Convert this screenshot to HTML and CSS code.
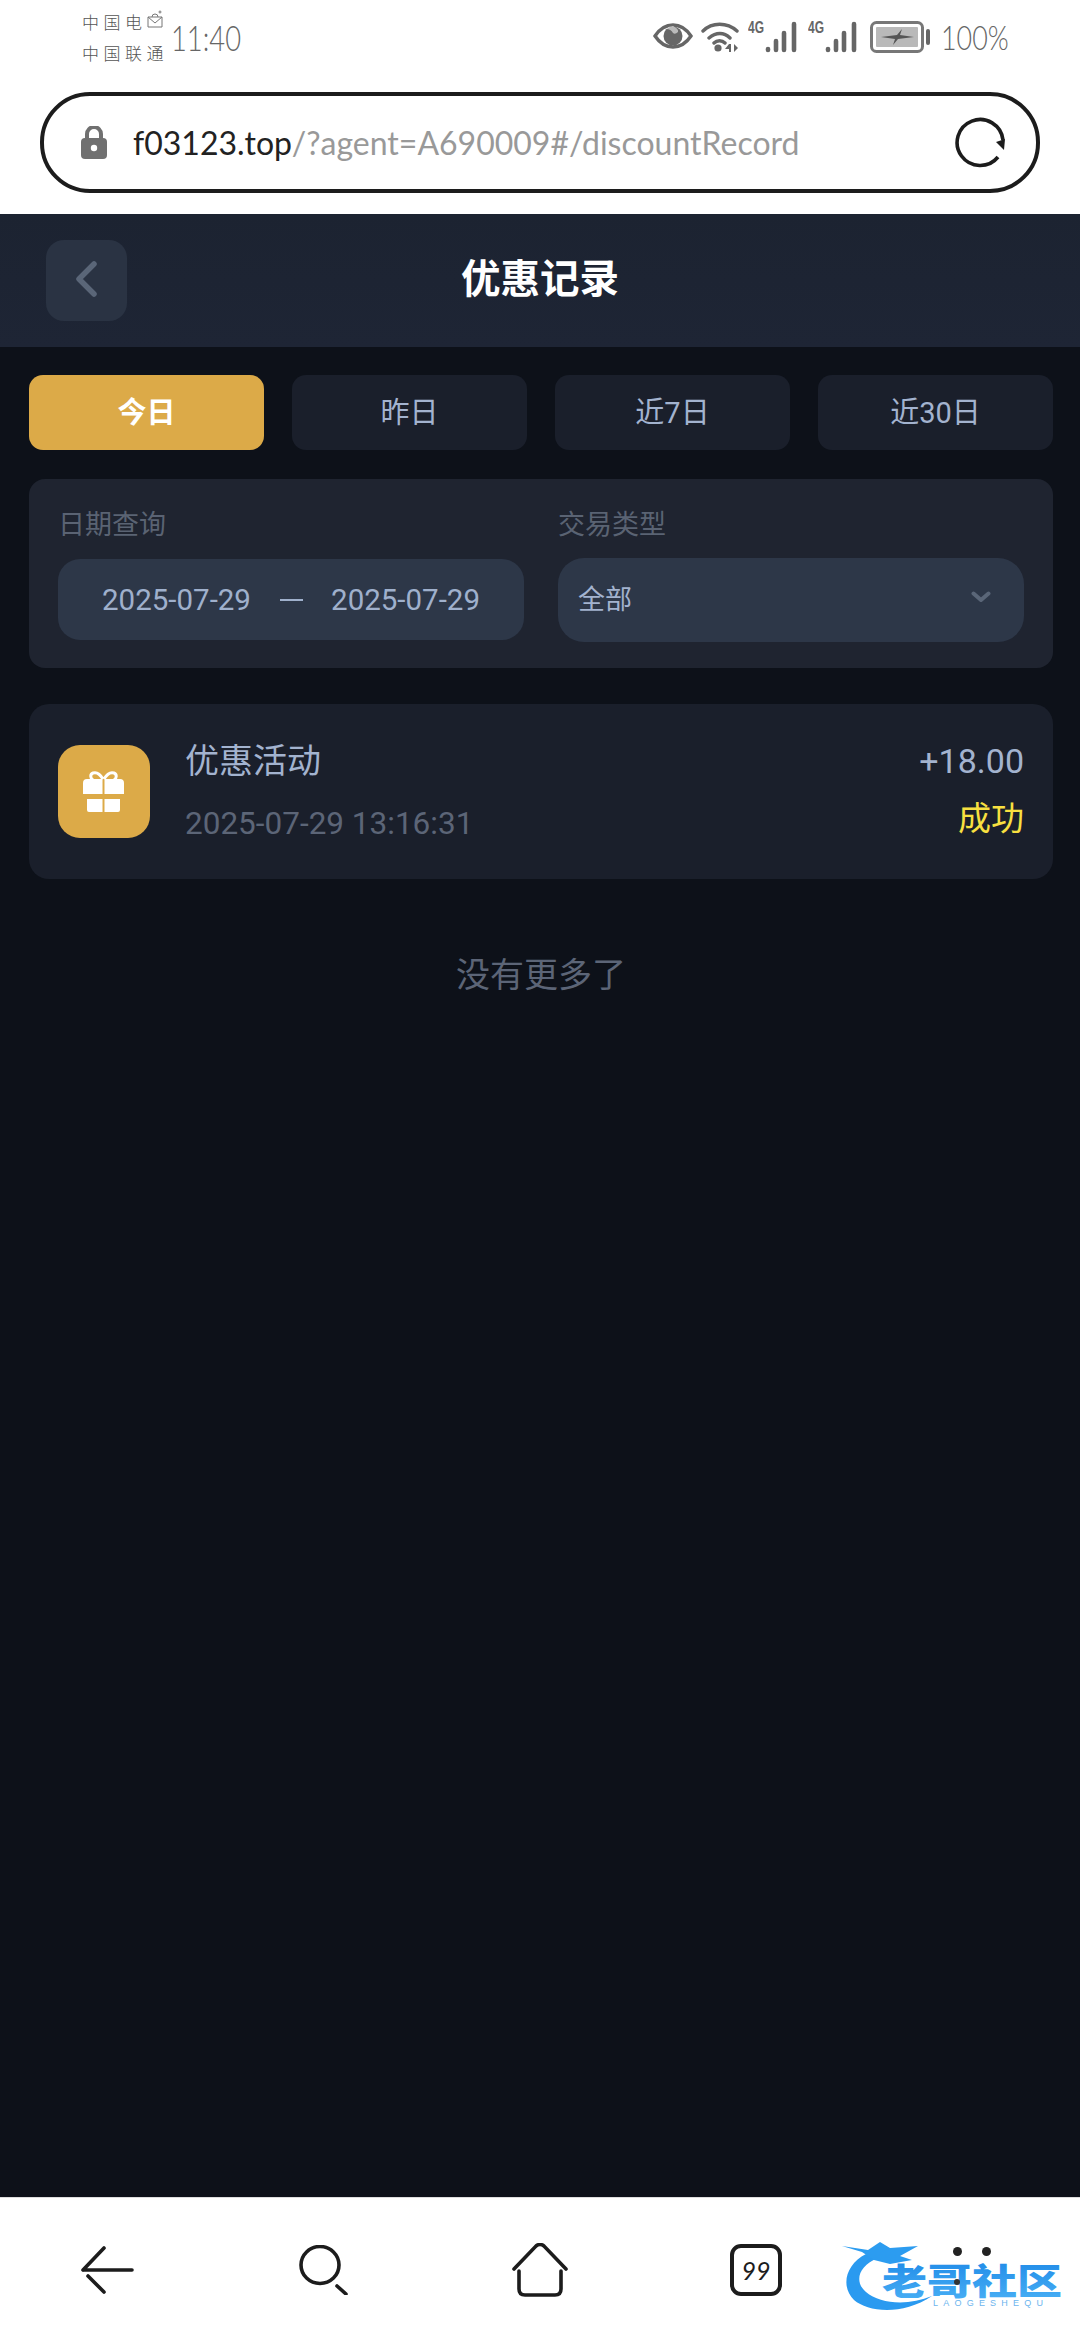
FILE: index.html
```html
<!DOCTYPE html>
<html lang="zh-CN">
<head>
    <meta charset="UTF-8">
    <meta name="viewport" content="width=device-width, initial-scale=1.0">
    <title>优惠记录</title>
    <link rel="stylesheet" href="styles.css">
</head>
<body>
    <div class="app">
        <div class="status-bar">
            <div class="carriers">
                <div class="carrier-line">中国电<svg class="mail-icon" width="16" height="18" viewBox="0 0 16 18"><path d="M1 7h14v10H1zM1 7l7 6 7-6M5 7a3 3 0 0 1 6 0" fill="none" stroke="#777" stroke-width="1"/><circle cx="13" cy="2" r="1" fill="none" stroke="#777"/></svg></div>
                <div class="carrier-line">中国联通</div>
            </div>
            <div class="clock">11:40</div>
            <div class="status-icons">
                <svg class="eye-icon" width="40" height="26" viewBox="0 0 40 26">
                    <path d="M2 13C8 4 14 2 20 2s12 2 18 11c-6 9-12 11-18 11S8 22 2 13z" fill="none" stroke="#666" stroke-width="3.4"/>
                    <circle cx="20" cy="13" r="9.5" fill="#666"/>
                    <path d="M20 3a10 10 0 0 0-7 3q5 0 7 4 2 2 5-1 1-3-5-6z" fill="#fff" opacity=".55"/>
                </svg>
                <svg class="wifi-icon" width="38" height="32" viewBox="0 0 38 32">
                    <path d="M2 10C11 1 26 1 36 10M8 17c7-6 15-6 21 0M13 22c3-3 8-3 11 0" fill="none" stroke="#666" stroke-width="3.4" stroke-linecap="round"/>
                    <circle cx="17" cy="27" r="3.6" fill="#666"/>
                    <path d="M28 23l-4 5h4v3h2v-8zM33 23v8l4-4z" fill="#666"/>
                </svg>
                <div class="signal">
                    <span class="signal-tag">4G</span>
                    <svg width="34" height="32" viewBox="0 0 34 32"><path d="M3 29v-1M11 29v-9M19 29v-17M29 29V3" fill="none" stroke="#666" stroke-width="4.6" stroke-linecap="round"/></svg>
                </div>
                <div class="signal">
                    <span class="signal-tag">4G</span>
                    <svg width="34" height="32" viewBox="0 0 34 32"><path d="M3 29v-1M11 29v-9M19 29v-17M29 29V3" fill="none" stroke="#666" stroke-width="4.6" stroke-linecap="round"/></svg>
                </div>
                <svg class="battery-icon" width="60" height="32" viewBox="0 0 60 32">
                    <rect x="1.5" y="1.5" width="51" height="29" rx="5" fill="#fff" stroke="#777" stroke-width="3"/>
                    <rect x="6" y="6" width="42" height="20" rx="1" fill="#b9b9b9"/>
                    <path d="M11 16l16-2 5-6-2 6 14 2-16 2-5 6 2-6z" fill="#555"/>
                    <rect x="56" y="8" width="4" height="16" rx="2" fill="#666"/>
                </svg>
                <span class="battery-text">100%</span>
            </div>
        </div>

        <div class="url-wrap">
            <div class="url-bar">
                <svg class="lock-icon" width="26" height="33" viewBox="0 0 26 33">
                    <path d="M6 14V8a7 7 0 0 1 14 0v6" fill="none" stroke="#707070" stroke-width="4"/>
                    <rect x="0" y="12" width="26" height="21" rx="4" fill="#707070"/>
                    <circle cx="13" cy="22" r="3.2" fill="#fff"/>
                </svg>
                <div class="url-text"><span class="url-host">f03123.top</span>/?agent=A690009#/discountRecord</div>
                <svg class="reload-icon" width="54" height="54" viewBox="0 0 54 54">
                    <path d="M44 41A23 23 0 1 1 49 24" fill="none" stroke="#1c1c1c" stroke-width="3.6"/>
                    <path d="M42 26l9-3-1 11z" fill="#1c1c1c"/>
                </svg>
            </div>
        </div>

        <div class="page">
            <div class="header">
                <div class="back-btn">
                    <svg width="24" height="36" viewBox="0 0 24 36"><path d="M20 3L5 18l15 15" fill="none" stroke="#5a6678" stroke-width="5.5" stroke-linecap="round" stroke-linejoin="round"/></svg>
                </div>
                <h1 class="title">优惠记录</h1>
            </div>

            <div class="content">
                <div class="tabs">
                    <div class="tab active">今日</div>
                    <div class="tab">昨日</div>
                    <div class="tab">近7日</div>
                    <div class="tab">近30日</div>
                </div>

                <div class="filter-card">
                    <div class="filter-col">
                        <div class="filter-label">日期查询</div>
                        <div class="date-box">
                            <span>2025-07-29</span>
                            <span class="date-dash"></span>
                            <span>2025-07-29</span>
                        </div>
                    </div>
                    <div class="filter-col">
                        <div class="filter-label">交易类型</div>
                        <div class="select-box">
                            <span>全部</span>
                            <svg width="20" height="12" viewBox="0 0 20 12"><path d="M2.5 2.5L10 9l7.5-6.5" fill="none" stroke="#5a6678" stroke-width="4" stroke-linecap="round" stroke-linejoin="round"/></svg>
                        </div>
                    </div>
                </div>

                <div class="record-card">
                    <div class="record-icon">
                        <svg width="42" height="42" viewBox="0 0 42 42">
                            <path d="M20 8C17 3 13 1 10 2 7 3 7 7 10 9M21 8c3-5 7-7 10-6 3 1 3 5 0 7" fill="none" stroke="#fff" stroke-width="3"/>
                            <path d="M0 12a4 4 0 0 1 4-4h15.500v15H0zM21.500 8H37a4 4 0 0 1 4 4v11H21.500z" fill="#fff"/>
                            <path d="M4 28h15.500v13H6a2 2 0 0 1-2-2zM21.500 28H37v11a2 2 0 0 1-2 2H21.500z" fill="#fff"/>
                        </svg>
                    </div>
                    <div class="record-info">
                        <div class="record-name">优惠活动</div>
                        <div class="record-time">2025-07-29 13:16:31</div>
                    </div>
                    <div class="record-right">
                        <div class="record-amount">+18.00</div>
                        <div class="record-status">成功</div>
                    </div>
                </div>

                <div class="no-more">没有更多了</div>
            </div>
        </div>

        <div class="bottom-nav">
            <div class="nav-item">
                <svg width="54" height="48" viewBox="0 0 54 48"><path d="M2 24h49M2 24L23 2M7 30l16 16" fill="none" stroke="#1c1c1c" stroke-width="3.6" stroke-linecap="round"/></svg>
            </div>
            <div class="nav-item">
                <svg width="50" height="50" viewBox="0 0 50 50"><ellipse cx="21" cy="20" rx="19" ry="18.5" fill="none" stroke="#1c1c1c" stroke-width="3.6"/><path d="M38 41l9 8" fill="none" stroke="#1c1c1c" stroke-width="3.6" stroke-linecap="round"/></svg>
            </div>
            <div class="nav-item">
                <svg width="56" height="54" viewBox="0 0 56 54"><path d="M2 26L24 3q4-3 8 0l22 23M7 28v18q0 6 6 6h30q6 0 6-6V28" fill="none" stroke="#1c1c1c" stroke-width="3.6" stroke-linecap="round"/></svg>
            </div>
            <div class="nav-item">
                <div class="tab-count">99</div>
            </div>
            <div class="nav-item">
                <div class="menu-dots"><i></i><i></i></div>
            </div>
            <svg class="logo" width="228" height="76" viewBox="0 0 228 76">
                <defs>
                    <linearGradient id="logoBlue" x1="0" y1="0" x2="0" y2="1">
                        <stop offset="0" stop-color="#1a86e6"/>
                        <stop offset="1" stop-color="#4cb2f6"/>
                    </linearGradient>
                </defs>
                <path d="M26 14C6 24 0 46 14 60c14 12 48 16 78-4-24 10-52 8-66-4C14 42 18 26 38 18z" fill="#2a9af0"/>
                <path d="M2 6l26 4 12-8 10 6 28-2-18 10 12 4-22 4-16-4-12-8z" fill="#2c9cf0"/>
                <text x="42" y="55" class="logo-name" textLength="180" lengthAdjust="spacingAndGlyphs" fill="url(#logoBlue)">老哥社区</text>
                <text x="93" y="66" class="logo-sub" textLength="110" lengthAdjust="spacing">LAOGESHEQU</text>
                <circle cx="117" cy="42" r="3" fill="#333"/>
            </svg>
        </div>
    </div>
</body>
</html>
```

FILE: styles.css
```css
* {
    margin: 0;
    padding: 0;
    box-sizing: border-box;
}

body {
    font-family: Roboto, 'Noto Sans CJK SC', sans-serif;
    background-color: #0d1119;
}

.app {
    display: flex;
    flex-direction: column;
    width: 1080px;
    height: 2340px;
    overflow: hidden;
}

/* phone status bar */
.status-bar {
    display: flex;
    align-items: flex-start;
    height: 92px;
    padding-left: 82px;
    background: #fff;
    color: #666;
    font-family: Lato, 'Noto Sans CJK SC', sans-serif;
}

.carriers {
    width: 89px;
    padding-top: 6px;
}

.carrier-line {
    display: flex;
    align-items: center;
    height: 31px;
    font-family: 'Noto Sans CJK SC', sans-serif;
    font-size: 17px;
    font-weight: 300;
    letter-spacing: 4.5px;
    color: #555;
}

.mail-icon {
    margin-top: -6px;
}

.clock {
    width: 71px;
    padding-top: 16px;
    font-size: 36px;
    font-weight: 300;
    line-height: 42px;
    white-space: nowrap;
    transform: scaleX(0.76);
    transform-origin: left;
}

.status-icons {
    display: flex;
    align-items: flex-start;
    margin-left: auto;
    padding: 21px 73px 0 0;
}

.eye-icon {
    margin-top: 2px;
    margin-right: 8px;
}

.wifi-icon {
    margin-right: 9px;
}

.signal {
    display: flex;
    align-items: flex-start;
    margin-right: 9px;
}

.signal-tag {
    width: 17px;
    font-family: 'Liberation Sans', sans-serif;
    font-size: 16px;
    font-weight: bold;
    line-height: 14px;
    white-space: nowrap;
    color: #666;
    transform: scaleX(0.75);
    transform-origin: left;
}

.battery-icon {
    margin-left: 2px;
    margin-right: 11px;
}

.battery-text {
    width: 66px;
    font-size: 34px;
    font-weight: 300;
    line-height: 32px;
    white-space: nowrap;
    transform: scaleX(0.79);
    transform-origin: left;
}

/* browser url bar */
.url-wrap {
    height: 122px;
    padding: 0 40px;
    background: #fff;
}

.url-bar {
    display: flex;
    align-items: center;
    height: 101px;
    padding: 0 28px 0 37px;
    border: 4px solid #1c1c1c;
    border-radius: 50px;
}

.url-text {
    flex: 1;
    padding-left: 26px;
    font-family: Lato, sans-serif;
    font-size: 32px;
    white-space: nowrap;
    color: #999;
}

.url-host {
    color: #222;
}

/* page */
.page {
    flex: 1;
    background-color: #0d1119;
}

.header {
    position: relative;
    display: flex;
    align-items: center;
    justify-content: center;
    height: 133px;
    padding-bottom: 10px;
    background: linear-gradient(180deg, #1c2331, #1e2535);
}

.back-btn {
    position: absolute;
    left: 46px;
    top: 26px;
    display: flex;
    align-items: center;
    justify-content: center;
    width: 81px;
    height: 81px;
    padding-bottom: 4px;
    padding-right: 2px;
    background-color: #2a3343;
    border-radius: 18px;
}

.title {
    font-size: 39.500px;
    font-weight: bold;
    color: #fff;
}

.content {
    padding: 28px 27px 0 29px;
}

.tabs {
    display: grid;
    grid-template-columns: repeat(4, 235px);
    justify-content: space-between;
}

.tab {
    display: flex;
    align-items: center;
    justify-content: center;
    height: 75px;
    padding-bottom: 5px;
    background-color: #1a1f2b;
    border-radius: 14px;
    font-size: 29px;
    color: #a3b3cf;
}

.tab.active {
    background-color: #dcaa48;
    color: #fff;
    font-weight: bold;
}

.filter-card {
    display: grid;
    grid-template-columns: 466px 466px;
    justify-content: space-between;
    margin-top: 29px;
    height: 189px;
    padding: 26px 29px 0;
    background-color: #1f2430;
    border-radius: 16px;
}

.filter-label {
    height: 54px;
    font-size: 27px;
    line-height: 40px;
    color: #5a6373;
}

.date-box {
    display: flex;
    align-items: center;
    justify-content: space-between;
    height: 81px;
    padding: 0 44px;
    background-color: #2d3748;
    border-radius: 22px;
    font-size: 29.500px;
    color: #9fb0cc;
}

.date-dash {
    width: 23px;
    height: 2px;
    background-color: #9fb0cc;
}

.select-box {
    display: flex;
    align-items: center;
    justify-content: space-between;
    height: 84px;
    margin-top: -1px;
    padding: 0 33px 6px 20px;
    background-color: #2d3748;
    border-radius: 26px;
    font-size: 27px;
    color: #a3b3cf;
}

.record-card {
    display: flex;
    align-items: center;
    height: 175px;
    margin-top: 36px;
    padding: 0 29px;
    background-color: #1a1f2b;
    border-radius: 20px;
}

.record-icon {
    display: flex;
    align-items: center;
    justify-content: center;
    width: 92px;
    height: 93px;
    background-color: #dcaa48;
    border-radius: 22px;
}

.record-info {
    flex: 1;
    margin-left: 35px;
    padding-bottom: 3px;
}

.record-name {
    font-size: 34px;
    line-height: 48px;
    color: #a3b3cf;
}

.record-time {
    margin-top: 19px;
    font-size: 31.500px;
    line-height: 40px;
    color: #5c6577;
}

.record-right {
    padding-bottom: 3px;
    text-align: right;
}

.record-amount {
    font-size: 34px;
    line-height: 48px;
    color: #a3b3cf;
}

.record-status {
    margin-top: 10px;
    font-size: 33px;
    line-height: 48px;
    color: #f8e040;
}

.no-more {
    margin-top: 71px;
    text-align: center;
    font-size: 34px;
    line-height: 50px;
    color: #5c6577;
}

/* browser bottom bar */
.bottom-nav {
    position: relative;
    display: grid;
    grid-template-columns: repeat(5, 216px);
    height: 143px;
    background: #fff;
    border-top: 1px solid #ddd;
}

.nav-item {
    display: flex;
    align-items: center;
    justify-content: center;
    padding-top: 2px;
}

.tab-count {
    display: flex;
    align-items: center;
    justify-content: center;
    width: 52px;
    height: 52px;
    border: 4px solid #1c1c1c;
    border-radius: 11px;
    font-family: Lato, sans-serif;
    font-size: 25px;
    font-style: italic;
    color: #1c1c1c;
}

.menu-dots {
    display: flex;
    gap: 20px;
    margin-bottom: 38px;
}

.menu-dots i {
    width: 9px;
    height: 9px;
    background: #222;
    border-radius: 50%;
}

/* watermark sitting over the nav */
.logo {
    position: absolute;
    left: 840px;
    top: 42px;
}

.logo-name {
    font-family: 'Noto Sans CJK SC', sans-serif;
    font-size: 36px;
    font-weight: 900;
}

.logo-sub {
    font-family: 'Liberation Sans', sans-serif;
    font-size: 9px;
    fill: #6db5ee;
}
```
